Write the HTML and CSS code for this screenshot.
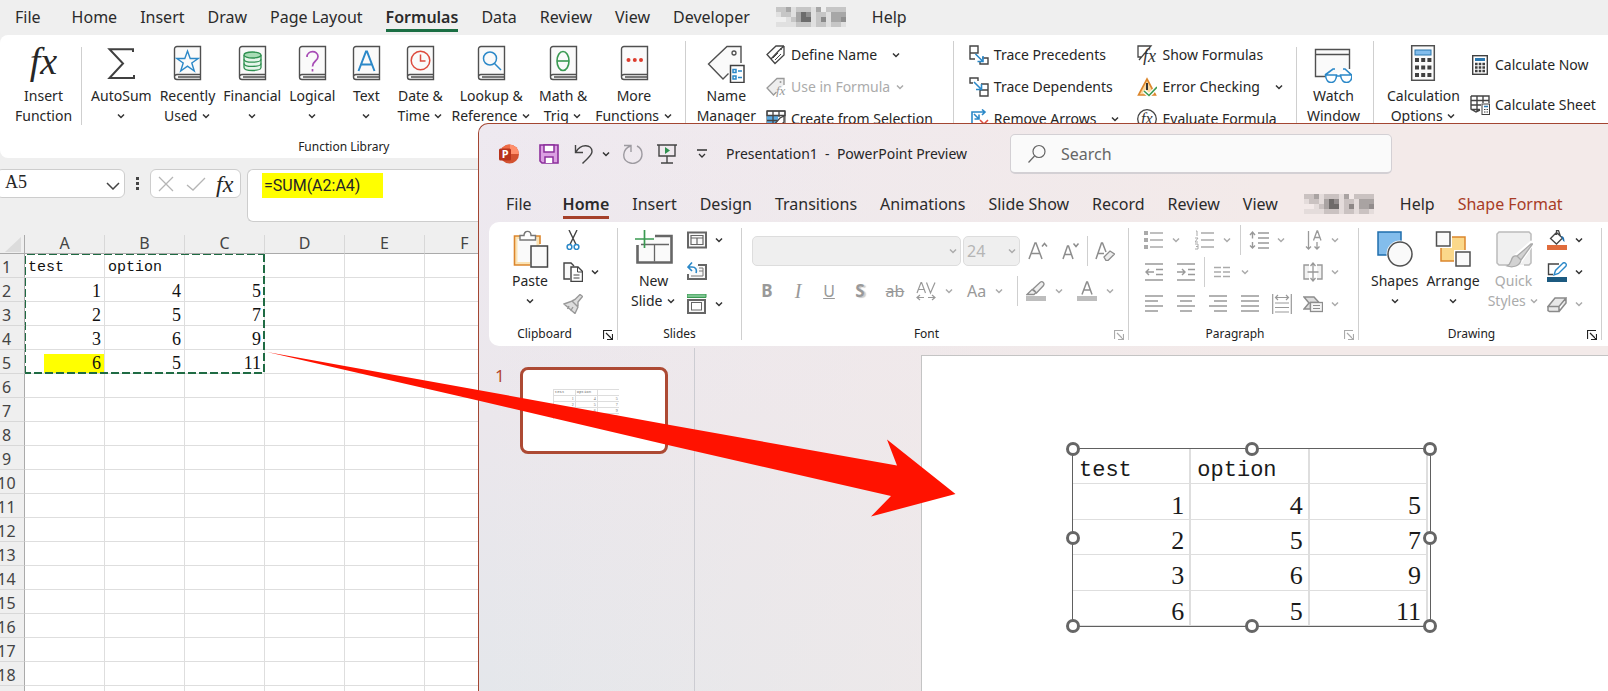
FILE: index.html
```html
<!DOCTYPE html>
<html lang="en">
<head>
<meta charset="utf-8">
<title>Spreadsheet and presentation</title>
<link rel="stylesheet" href="styles.css">
</head>
<body>
<svg class="defs" aria-hidden="true">
  <symbol id="chev" viewBox="0 0 10 10"><path d="M2 3.500l3 3 3-3" fill="none" stroke="currentColor" stroke-width="1.500"/></symbol>
  <symbol id="book" viewBox="0 0 36 36"><path d="M8 1.500H31.500V34.500H8a2.500 2.500 0 0 1-2.500-2.500V4a2.500 2.500 0 0 1 2.500-2.500zM5.500 32a2.500 2.500 0 0 1 2.500-2.500H31.500M9 32H31" fill="#fafafa" stroke="#505050" stroke-width="1.400"/></symbol>
  <symbol id="launch" viewBox="0 0 10 10"><path d="M.5 9V.5H9M3 3l6 6M9.500 4v5.500H4" fill="none" stroke="currentColor" stroke-width="1.200"/></symbol>
  <symbol id="mosaic" viewBox="0 0 14 4">
    <path fill="#000" opacity=".06" d="M0 1h1v1h-1zM0 3h2v1h-2zM3 0h1v2h-1zM3 3h1v1h-1zM7 0h1v4h-1zM10 1h1v3h-1zM2 2h1v2h-1zM13 3h1v1h-1z"/>
    <path fill="#000" opacity=".17" d="M0 0h1v1h-1zM1 0h1v2h-1zM2 1h1v1h-1zM4 0h3v1h-3zM8 1h2v2h-2zM10 0h4v1h-4zM8 3h2v1h-2zM4 3h3v1h-3zM11 3h2v1h-2zM3 2h1v1h-1z"/>
    <path fill="#000" opacity=".3" d="M2 0h1v1h-1zM4 1h1v2h-1zM8 0h1v1h-1zM9 2h1v1h-1zM11 1h2v2h-2zM13 1h1v1h-1z"/>
    <path fill="#000" opacity=".55" d="M5 1h1v2h-1zM6 2h1v1h-1z"/>
    <path fill="#000" opacity=".4" d="M6 1h1v1h-1zM13 2h1v1h-1z"/>
  </symbol>
</svg>

<main class="excel">
  <nav class="tabs xl-tabs">
    <a href="#" class="file">File</a><a href="#">Home</a><a href="#">Insert</a><a href="#">Draw</a><a href="#">Page Layout</a><a href="#" class="active">Formulas</a><a href="#">Data</a><a href="#">Review</a><a href="#">View</a><a href="#">Developer</a><a href="#" aria-label="Add-in tab"><svg class="mosaic"><use href="#mosaic"/></svg></a><a href="#">Help</a>
  </nav>

  <div class="ribbon xl-ribbon">
    <section class="group library">
      <div class="tools">
        <button class="big"><span class="ico fx">fx</span><span>Insert<br>Function</span></button>
        <i class="sep short"></i>
        <button class="big"><svg class="ico" viewBox="0 0 36 36"><path d="M30 7V4.200H6.500L20 18.500 6.500 33H31v-3" fill="none" stroke="#404040" stroke-width="2"/></svg><span>AutoSum<br><svg class="chev"><use href="#chev"/></svg></span></button>
        <button class="big"><svg class="ico" viewBox="0 0 36 36"><use href="#book"/><path d="M18.500 6l2.700 7.500h8L22.800 18l2.500 8-6.800-4.800L11.700 26l2.500-8-6.400-4.500h8z" fill="none" stroke="#2b88c8" stroke-width="1.400"/></svg><span>Recently<br>Used <svg class="chev"><use href="#chev"/></svg></span></button>
        <button class="big"><svg class="ico" viewBox="0 0 36 36"><use href="#book"/><path d="M10 10v12.500c0 4 17 4 17 0V10" fill="#e6f5ea" stroke="#2f9150" stroke-width="1.300"/><ellipse cx="18.500" cy="10" rx="8.500" ry="3" fill="#a8dcb5" stroke="#2f9150" stroke-width="1.300"/><path d="M10 14.200c0 4 17 4 17 0M10 18.400c0 4 17 4 17 0" fill="none" stroke="#2f9150" stroke-width="1.300"/></svg><span>Financial<br><svg class="chev"><use href="#chev"/></svg></span></button>
        <button class="big"><svg class="ico" viewBox="0 0 36 36"><use href="#book"/><path d="M13 12c0-7 11-7 11-.5 0 5-5.500 4-5.500 10M18.500 24v2.500" fill="none" stroke="#a74bb5" stroke-width="1.700"/></svg><span>Logical<br><svg class="chev"><use href="#chev"/></svg></span></button>
        <button class="big narrow"><svg class="ico" viewBox="0 0 36 36"><use href="#book"/><path d="M10.500 26L18 6.500h1L26.500 26M13 19.500h11" fill="none" stroke="#2b88c8" stroke-width="2"/></svg><span>Text<br><svg class="chev"><use href="#chev"/></svg></span></button>
        <button class="big"><svg class="ico" viewBox="0 0 36 36"><use href="#book"/><circle cx="18.500" cy="15.500" r="9.300" fill="none" stroke="#dd4b3e" stroke-width="1.500"/><path d="M18.500 9.500v6.500h5" fill="none" stroke="#dd4b3e" stroke-width="1.500"/></svg><span>Date &amp;<br>Time <svg class="chev"><use href="#chev"/></svg></span></button>
        <button class="big"><svg class="ico" viewBox="0 0 36 36"><use href="#book"/><circle cx="17" cy="13.500" r="6.500" fill="none" stroke="#2b88c8" stroke-width="1.500"/><path d="M21.500 18.500l6.500 6.500" stroke="#2b88c8" stroke-width="1.500"/></svg><span>Lookup &amp;<br>Reference <svg class="chev"><use href="#chev"/></svg></span></button>
        <button class="big"><svg class="ico" viewBox="0 0 36 36"><use href="#book"/><ellipse cx="18" cy="16" rx="6" ry="9.500" fill="none" stroke="#3a9a52" stroke-width="1.600"/><path d="M12 16h12" stroke="#3a9a52" stroke-width="1.600"/></svg><span>Math &amp;<br>Trig <svg class="chev"><use href="#chev"/></svg></span></button>
        <button class="big"><svg class="ico" viewBox="0 0 36 36"><use href="#book"/><g fill="#dd3d2e"><circle cx="12.500" cy="15" r="2"/><circle cx="18.800" cy="15" r="2"/><circle cx="25" cy="15" r="2"/></g></svg><span>More<br>Functions <svg class="chev"><use href="#chev"/></svg></span></button>
      </div>
      <div class="caption"><span>Function Library</span></div>
    </section>
    <i class="sep"></i>
    <section class="group names">
      <div class="tools">
        <button class="big"><svg class="ico wide" viewBox="0 0 38 38"><path d="M34 18V1.500H20L1.500 19 16 34l5.500-5.500" fill="#fafafa" stroke="#505050" stroke-width="1.400"/><circle cx="27" cy="8" r="2" fill="none" stroke="#505050" stroke-width="1.300"/><rect x="23.500" y="20.500" width="13.500" height="17" fill="#fff" stroke="#404040" stroke-width="1.500"/><path d="M26 24.500h3v3h-3zM26 31h3v3h-3zM31 26h4M31 32.500h4" fill="none" stroke="#2b88c8" stroke-width="1.500"/></svg><span>Name<br>Manager</span></button>
        <div class="stack">
          <button class="line"><svg viewBox="0 0 20 20"><path d="M18 1v9L9 18.500 5 14M18 1h-8L1 9.500l4 4.500L13 5.500M18 1l-5 4.500M18 4.500v6" fill="none" stroke="#444" stroke-width="1.300"/><circle cx="15" cy="4" r="1" fill="#444"/><path d="M7 13l5-5M9 15l6-6" stroke="#444"/></svg>Define Name<svg class="chev far"><use href="#chev"/></svg></button>
          <button class="line off" disabled><svg viewBox="0 0 20 20"><path d="M18 8V1.500h-7L1 11l6.500 7 3-3" fill="#eee" stroke="#999" stroke-width="1.300"/><circle cx="14.500" cy="5" r="1" fill="#999"/><text x="10" y="18" class="fx-svg" font-size="13" fill="#999">fx</text></svg>Use in Formula<svg class="chev"><use href="#chev"/></svg></button>
          <button class="line"><svg viewBox="0 0 20 20"><path d="M1 2h18v17H1z" fill="#fff" stroke="#444"/><path d="M1 7h11v9H1z" fill="#5aa9e0"/><path d="M1 2h18v4.500H1zM7 2v17M13 2v6M1 11.500h10" fill="none" stroke="#444" stroke-width="1.300"/><path d="M18 7v6l-7 7-4-3 7-8z" fill="#fff" stroke="#444" stroke-width="1.300"/></svg>Create from Selection</button>
        </div>
      </div>
    </section>
    <i class="sep"></i>
    <section class="group audit">
      <div class="tools">
        <div class="stack">
          <button class="line"><svg viewBox="0 0 20 20"><path d="M1 1h8v7H1zM1 8v6h5M13 13h6v6h-8v-3" fill="#fff" stroke="#444" stroke-width="1.400"/><path d="M6.500 9l7 7M14 11v5.500H8.500" fill="none" stroke="#2b88c8" stroke-width="1.600"/></svg>Trace Precedents</button>
          <button class="line"><svg viewBox="0 0 20 20"><path d="M4 6H1V1h8v3M12 7h7v12h-8v-6h8" fill="#fff" stroke="#444" stroke-width="1.400"/><path d="M5 5l7 7M12.500 7v5.500H7" fill="none" stroke="#2b88c8" stroke-width="1.600"/></svg>Trace Dependents</button>
          <button class="line"><svg viewBox="0 0 20 20"><path d="M3 19V3h13M13 .5L16 3l-3 3M5 5l5 5M10 5.500V10H5.500" fill="none" stroke="#2b88c8" stroke-width="1.600"/><path d="M11 11l7 7M19 11l-7 7" stroke="#dd4b3e" stroke-width="1.600"/></svg>Remove Arrows<svg class="chev far"><use href="#chev"/></svg></button>
        </div>
        <div class="stack">
          <button class="line"><svg viewBox="0 0 20 20"><path d="M5 12H1V1h13L2 15" fill="none" stroke="#444" stroke-width="1.300"/><text x="6" y="17" class="fx-svg" font-size="18" fill="#333">fx</text></svg>Show Formulas</button>
          <button class="line"><svg viewBox="0 0 20 20"><path d="M10 2l8.500 16H1.500z" fill="#fbd9a0" stroke="#dc862c" stroke-width="1.600"/><path d="M10 6v7" stroke="#333" stroke-width="2"/><path d="M7 14l5 4.500 8-8.500" fill="none" stroke="#fff" stroke-width="4"/><path d="M7 14l5 4.500 8-8.500" fill="none" stroke="#3a9a52" stroke-width="1.600"/></svg>Error Checking<svg class="chev far"><use href="#chev"/></svg></button>
          <button class="line"><svg viewBox="0 0 20 20"><circle cx="10" cy="10" r="9.300" fill="#fff" stroke="#444" stroke-width="1.300"/><text x="4" y="14.500" class="fx-svg" font-size="16" fill="#333">fx</text></svg>Evaluate Formula</button>
        </div>
        <i class="sep short"></i>
        <button class="big"><svg class="ico wide" viewBox="0 0 38 38"><path d="M11 31.500H1.500V4.500h34V24" fill="#fafafa" stroke="#505050" stroke-width="1.400"/><path d="M1.500 9.500h34" stroke="#505050" stroke-width="1.400"/><path d="M11 30h11.500c0 10-10.500 10-11 0zM26.500 30H38c0 10-10.500 10-11.500 0zM22 31h5M11 30l8-6h2M37.500 30l-6.500-6h-2" fill="none" stroke="#2b88c8" stroke-width="1.600"/></svg><span>Watch<br>Window</span></button>
      </div>
    </section>
    <i class="sep"></i>
    <section class="group calc">
      <div class="tools">
        <button class="big"><svg class="ico" viewBox="0 0 36 36"><rect x="6.700" y=".7" width="22.600" height="34.600" fill="#fafafa" stroke="#505050" stroke-width="1.500"/><rect x="10" y="5" width="16" height="5" fill="#83bdec" stroke="#2b78b0"/><path d="M10 15h17M10 22.500h17M10 30h17" stroke="#404040" stroke-width="4" stroke-dasharray="4 2.200"/></svg><span>Calculation<br>Options <svg class="chev"><use href="#chev"/></svg></span></button>
        <div class="stack loose">
          <button class="line"><svg viewBox="0 0 20 20"><rect x="2.700" y=".7" width="14.600" height="18.600" fill="#fff" stroke="#404040" stroke-width="1.400"/><path d="M5 4.500h10" stroke="#2b78b0" stroke-width="3"/><path d="M5 9h10M5 12.500h10M5 16h10" stroke="#404040" stroke-width="2.400" stroke-dasharray="2.600 1.100"/></svg>Calculate Now</button>
          <button class="line"><svg viewBox="0 0 20 20"><path d="M1 1h18v7M1 1v13l5 3 4-2M1 5.500h18M1 10h10M1 14.500h9M7 1v15M13 1v7" fill="none" stroke="#444" stroke-width="1.400"/><rect x="12" y="9" width="7.500" height="10.500" fill="#fff" stroke="#404040"/><path d="M14 11.500h4" stroke="#2b78b0" stroke-width="1.500"/><path d="M14 14.500h4M14 17h4" stroke="#404040" stroke-dasharray="1.500 1"/></svg>Calculate Sheet</button>
        </div>
      </div>
    </section>
  </div>

  <div class="formula-row">
    <label class="namebox"><input value="A5" aria-label="Name box"><svg class="drop" viewBox="0 0 14 8"><path d="M1 1l6 6 6-6" fill="none" stroke="#444" stroke-width="1.500"/></svg></label>
    <svg class="dots" viewBox="0 0 4 14"><path d="M0 0h3v3H0zM0 5h3v3H0zM0 10h3v3H0z" fill="#444"/></svg>
    <div class="fxbox">
      <button aria-label="Cancel"><svg viewBox="0 0 20 16"><path d="M3 1l14 14M17 1L3 15" stroke="#b5b5b5" stroke-width="1.300"/></svg></button>
      <button aria-label="Enter"><svg viewBox="0 0 20 16"><path d="M1 9l6 5L19 2" fill="none" stroke="#b5b5b5" stroke-width="1.300"/></svg></button>
      <button class="fx-small">fx</button>
    </div>
    <div class="formula"><input value="=SUM(A2:A4)" aria-label="Formula"></div>
  </div>

  <div class="sheet">
    <table>
      <thead><tr><th class="corner"><svg viewBox="0 0 16 15"><path d="M16 0v15H0z" fill="#dcdcdc"/></svg></th><th>A</th><th>B</th><th>C</th><th>D</th><th>E</th><th>F</th></tr></thead>
      <tbody>
      <tr><th>1</th><td class="word">test</td><td class="word">option</td><td></td><td></td><td></td><td></td></tr>
      <tr><th>2</th><td>1</td><td>4</td><td>5</td><td></td><td></td><td></td></tr>
      <tr><th>3</th><td>2</td><td>5</td><td>7</td><td></td><td></td><td></td></tr>
      <tr><th>4</th><td>3</td><td>6</td><td>9</td><td></td><td></td><td></td></tr>
      <tr><th>5</th><td class="marked">6</td><td>5</td><td>11</td><td></td><td></td><td></td></tr>
      <tr><th>6</th><td></td><td></td><td></td><td></td><td></td><td></td></tr>
      <tr><th>7</th><td></td><td></td><td></td><td></td><td></td><td></td></tr>
      <tr><th>8</th><td></td><td></td><td></td><td></td><td></td><td></td></tr>
      <tr><th>9</th><td></td><td></td><td></td><td></td><td></td><td></td></tr>
      <tr><th>10</th><td></td><td></td><td></td><td></td><td></td><td></td></tr>
      <tr><th>11</th><td></td><td></td><td></td><td></td><td></td><td></td></tr>
      <tr><th>12</th><td></td><td></td><td></td><td></td><td></td><td></td></tr>
      <tr><th>13</th><td></td><td></td><td></td><td></td><td></td><td></td></tr>
      <tr><th>14</th><td></td><td></td><td></td><td></td><td></td><td></td></tr>
      <tr><th>15</th><td></td><td></td><td></td><td></td><td></td><td></td></tr>
      <tr><th>16</th><td></td><td></td><td></td><td></td><td></td><td></td></tr>
      <tr><th>17</th><td></td><td></td><td></td><td></td><td></td><td></td></tr>
      <tr><th>18</th><td></td><td></td><td></td><td></td><td></td><td></td></tr>
      <tr><th></th><td></td><td></td><td></td><td></td><td></td><td></td></tr>
      </tbody>
    </table>
    <svg class="marquee" viewBox="0 0 241 120"><g fill="none" stroke="#1f6b43" stroke-dasharray="8 3"><path d="M.5 120V.5H240"/><path d="M239 0v119H0" stroke-width="2"/></g></svg>
  </div>
</main>

<section class="ppt">
  <header class="titlebar">
    <svg class="i20" viewBox="0 0 20 20"><circle cx="10.500" cy="10" r="9.500" fill="#d35230"/><path d="M10.500.5a9.500 9.500 0 0 1 9.500 9.500h-9.500z" fill="#ff8f6b"/><path d="M10.500 .5A9.500 9.500 0 0 0 2 6l8.500 4z" fill="#ed6c47"/><rect y="4.500" width="12" height="12" rx="1.500" fill="#b7331b"/><text x="2.800" y="14" class="logo-p">P</text></svg>
    <button class="i20 save" aria-label="Save"><svg viewBox="0 0 20 20"><path d="M1 1h18v18H3l-2-2z" fill="#dba0e2" stroke="#8c2f9c" stroke-width="1.600"/><path d="M5 1h10v7H5zM6 19v-6h8v6" fill="#fff" stroke="#8c2f9c" stroke-width="1.500"/></svg></button>
    <button class="split undo" aria-label="Undo"><svg class="i20" viewBox="0 0 20 20"><path d="M1.500 1v7.500H9M2 8C7-1 18 .5 18 7.500c0 4-4 6-9.500 12" fill="none" stroke="#444" stroke-width="1.400"/></svg><svg class="chev"><use href="#chev"/></svg></button>
    <button class="i20 redo" aria-label="Repeat"><svg viewBox="0 0 20 20"><path d="M1 1.500h7V8M7.500 2C-1 5.500-1 15 5 18.200c7 3.500 14-1.500 14-8C19 6 17 3.500 14 2" fill="none" stroke="#9d9aa0" stroke-width="1.400"/></svg></button>
    <button class="i20 present" aria-label="Start slide show"><svg viewBox="0 0 20 20"><path d="M0 1h20M2 1v11h16V1M10 12v7M4 19h12" fill="none" stroke="#444" stroke-width="1.400"/><path d="M8 3l5 3.500L8 10z" fill="#2f9150"/></svg></button>
    <button class="more" aria-label="Customize toolbar"><svg viewBox="0 0 10 10"><path d="M0 1h10M2 5l3 3 3-3" fill="none" stroke="#333" stroke-width="1.300"/></svg></button>
    <h1>Presentation1&nbsp; -&nbsp; PowerPoint Preview</h1>
    <label class="search"><svg viewBox="0 0 20 20"><circle cx="12" cy="7.500" r="6" fill="none" stroke="#666" stroke-width="1.200"/><path d="M7.500 12L1.500 18.500" stroke="#666" stroke-width="1.200"/></svg><input placeholder="Search" aria-label="Search"></label>
  </header>

  <nav class="tabs ppt-tabs">
    <a href="#" class="file">File</a><a href="#" class="active">Home</a><a href="#">Insert</a><a href="#">Design</a><a href="#">Transitions</a><a href="#">Animations</a><a href="#">Slide Show</a><a href="#">Record</a><a href="#">Review</a><a href="#">View</a><a href="#" aria-label="Add-in tab"><svg class="mosaic"><use href="#mosaic"/></svg></a><a href="#">Help</a><a href="#" class="context">Shape Format</a>
  </nav>

  <div class="ribbon ppt-ribbon">
    <section class="group clipboard">
      <div class="tools">
        <button class="big"><svg class="ico wide" viewBox="0 0 38 38"><path d="M29 14V6H3.500v29H19" fill="#fbe3b4" stroke="#dc862c" stroke-width="1.600"/><path d="M6.500 9h19v23h-19z" fill="#fafafa"/><path d="M9 10V5.500h4c0-5.500 7-5.500 7 0h4.500V10z" fill="#fff" stroke="#777" stroke-width="1.400"/><rect x="20" y="16" width="16.500" height="21" fill="#fafafa" stroke="#444" stroke-width="1.500"/></svg><span>Paste<br><svg class="chev"><use href="#chev"/></svg></span></button>
        <div class="stack">
          <button class="split" aria-label="Cut"><svg class="i20" viewBox="0 0 20 20"><path d="M6 0l7 14.500M14 0L7 14.500" stroke="#444" stroke-width="1.400"/><g fill="none" stroke="#2b88c8" stroke-width="1.500"><circle cx="6.500" cy="17" r="2.400"/><circle cx="13.500" cy="17" r="2.400"/></g></svg></button>
          <button class="split" aria-label="Copy"><svg class="i20" viewBox="0 0 20 20"><path d="M7 17H1V1h7l3 3" fill="#fafafa" stroke="#444" stroke-width="1.400"/><path d="M8 5h7l4.500 4.500V19.500H8z" fill="#fff" stroke="#444" stroke-width="1.400"/><path d="M14.500 5v5h5M10.500 13h6M10.500 16h6" fill="none" stroke="#444"/></svg><svg class="chev"><use href="#chev"/></svg></button>
          <button class="split" aria-label="Format painter"><svg class="i20" viewBox="0 0 20 20"><path d="M1 10l8-3 6 6-3 6.500zM9 7l3-1.500L17 .5l2.500 2L15 8v4M6 12l-1.500 3M10 13l-2.500 4" fill="#ddd" stroke="#999" stroke-width="1.400"/></svg></button>
        </div>
      </div>
      <div class="caption with-launch"><span>Clipboard</span><button class="launch" aria-label="Clipboard options"><svg><use href="#launch"/></svg></button></div>
    </section>
    <i class="sep"></i>
    <section class="group slides">
      <div class="tools">
        <button class="big"><svg class="ico wide" viewBox="0 0 38 38"><path d="M20 6h16.500v26.500h-34V15" fill="#fafafa" stroke="#666" stroke-width="2.600"/><path d="M6 14.500h28M19.500 14.500v17" stroke="#666" stroke-width="1.300"/><path d="M9.500 0v18M0 9h19" stroke="#3a9a52" stroke-width="1.700"/></svg><span>New<br>Slide <svg class="chev"><use href="#chev"/></svg></span></button>
        <div class="stack">
          <button class="split" aria-label="Layout"><svg class="i20" viewBox="0 0 20 20"><rect x="1" y="2.500" width="18" height="15" fill="#fafafa" stroke="#666" stroke-width="2"/><path d="M4 5.500h12v9H4zM4 8h12M10 8v6.500" fill="none" stroke="#666" stroke-width="1.200"/></svg><svg class="chev"><use href="#chev"/></svg></button>
          <button class="split" aria-label="Reset"><svg class="i20" viewBox="0 0 20 20"><path d="M11 3h8v14H1V12" fill="#fafafa" stroke="#666" stroke-width="2"/><path d="M12 6h4M12 9h4M4 14h12V6" fill="none" stroke="#777"/><path d="M5 .5L1 5l4 4M1 5h4c4 0 5 3 4 6" fill="none" stroke="#2b88c8" stroke-width="1.600"/></svg></button>
          <button class="split" aria-label="Section"><svg class="i20" viewBox="0 0 20 20"><path d="M0 0h19v3.500H0z" fill="#7cc490"/><path d="M0 0h19v3.500H0z" fill="none" stroke="#3a9a52"/><rect x="1" y="6" width="17" height="13" fill="#fafafa" stroke="#666" stroke-width="2"/><rect x="4.500" y="8.500" width="10" height="7.500" fill="#fff" stroke="#666"/></svg><svg class="chev"><use href="#chev"/></svg></button>
        </div>
      </div>
      <div class="caption"><span>Slides</span></div>
    </section>
    <i class="sep"></i>
    <section class="group font off">
      <div class="font-rows">
        <div class="row">
          <label class="combo name"><select disabled aria-label="Font"><option></option></select><svg class="chev"><use href="#chev"/></svg></label>
          <label class="combo size"><select disabled aria-label="Font size"><option>24</option></select><svg class="chev"><use href="#chev"/></svg></label>
          <button class="i20 grow" disabled aria-label="Increase font size"><svg viewBox="0 0 20 20"><path d="M1 18L7 2h1l6 16M3 12.500h9M14 5.500l2.500-3 2.500 3" fill="none" stroke="#8d8d8d" stroke-width="1.500"/></svg></button>
          <button class="i20 shrink" disabled aria-label="Decrease font size"><svg viewBox="0 0 20 20"><path d="M3 18L7.500 5h1L13 18M4.500 13.500h7M13.500 2.500l2.500 3 2.500-3" fill="none" stroke="#8d8d8d" stroke-width="1.500"/></svg></button>
          <i class="sep mini"></i>
          <button class="i20" disabled aria-label="Clear formatting"><svg viewBox="0 0 20 20"><path d="M1 18L6.500 2h1L11 11M3 12.500h6" fill="none" stroke="#8d8d8d" stroke-width="1.500"/><path d="M9 16l6-6 4.500 3L13 19.500h-2z" fill="#eee" stroke="#8d8d8d" stroke-width="1.300"/></svg></button>
        </div>
        <div class="row styles">
          <button class="i20 letter" disabled><b>B</b></button>
          <button class="i20 letter serif" disabled><em>I</em></button>
          <button class="i20 letter" disabled><u>U</u></button>
          <button class="i20 letter shadow" disabled><b>S</b></button>
          <button class="i20 letter small" disabled><s>ab</s></button>
          <button class="split" disabled aria-label="Character spacing"><svg class="i20" viewBox="0 0 20 20"><path d="M1 12L5 1.500h.6L9.500 12M2.500 8.500h6M10.500 1.500L14.500 12l4.500-10.500M4 14L1 16.500 4 19M1 16.500h7M16 14l3 2.500-3 2.500M19 16.500h-7" fill="none" stroke="#999" stroke-width="1.200"/></svg><svg class="chev"><use href="#chev"/></svg></button>
          <button class="split letter" disabled>Aa<svg class="chev"><use href="#chev"/></svg></button>
          <i class="sep mini"></i>
          <button class="split" disabled aria-label="Highlight"><svg class="i20" viewBox="0 0 20 20"><path d="M1 13.500l5-5 4 3-2 2zM7 8l7.500-7c2-1 4.500 1 3 3.500L10.500 12z" fill="#eee" stroke="#8d8d8d" stroke-width="1.300"/><path d="M0 15h20v5H0z" fill="#bdbdbd"/></svg><svg class="chev"><use href="#chev"/></svg></button>
          <button class="split" disabled aria-label="Font color"><svg class="i20" viewBox="0 0 20 20"><path d="M5 13.500L9.700 1h.8L15 13.500M6.500 9h7" fill="none" stroke="#8d8d8d" stroke-width="1.500"/><path d="M0 15h20v5H0z" fill="#bdbdbd"/></svg><svg class="chev"><use href="#chev"/></svg></button>
        </div>
      </div>
      <div class="caption with-launch"><span>Font</span><button class="launch" aria-label="Font options"><svg><use href="#launch"/></svg></button></div>
    </section>
    <i class="sep"></i>
    <section class="group paragraph off">
      <div class="tools">
        <div class="stack">
          <div class="row">
            <button class="split" disabled aria-label="Bullets"><svg class="i20" viewBox="0 0 20 20"><path d="M0 1h4v4H0zM0 8h4v4H0zM0 15h4v4H0z" fill="#aaa"/><path d="M6 3h13M6 10h13M6 17h13" stroke="#aaa" stroke-width="1.500"/></svg><svg class="chev"><use href="#chev"/></svg></button>
            <button class="split" disabled aria-label="Numbering"><svg class="i20" viewBox="0 0 20 20"><path d="M1 1h1v5M0 8h3l-3 4h3M0 14h3v5H0M1 16.500h2" fill="none" stroke="#aaa"/><path d="M6 3h13M6 10h13M6 17h13" stroke="#aaa" stroke-width="1.500"/></svg><svg class="chev"><use href="#chev"/></svg></button>
            <i class="sep mini"></i>
            <button class="split" disabled aria-label="Line spacing"><svg class="i20" viewBox="0 0 20 20"><path d="M3.500 3v5.500M1 5l2.500-3L6 5M3.500 18v-6M1 15.500L3.500 18 6 15.500M9 3h11M9 8h11M9 13h11M9 18h11" fill="none" stroke="#999" stroke-width="1.400"/></svg><svg class="chev"><use href="#chev"/></svg></button>
          </div>
          <div class="row twelve">
            <button class="i20" disabled aria-label="Outdent"><svg viewBox="0 0 20 20"><path d="M1 2h18M12 7.500h7M12 12.500h7M1 18h18M2 10h8M5 7l-3 3 3 3" fill="none" stroke="#999" stroke-width="1.400"/></svg></button>
            <button class="i20" disabled aria-label="Indent"><svg viewBox="0 0 20 20"><path d="M1 2h18M12 7.500h7M12 12.500h7M1 18h18M1 10h8M6 7l3 3-3 3" fill="none" stroke="#999" stroke-width="1.400"/></svg></button>
            <i class="sep mini tight"></i>
            <button class="split" disabled aria-label="Columns"><svg class="i20" viewBox="0 0 20 20"><path d="M1 5.500h7M1 10h7M1 14.500h7M10 5.500h7M10 10h7M10 14.500h7" stroke="#aaa" stroke-width="1.300"/></svg><svg class="chev"><use href="#chev"/></svg></button>
          </div>
          <div class="row twelve">
            <button class="i20" disabled aria-label="Align left"><svg viewBox="0 0 20 20"><path d="M1 2h18M1 7h13M1 12h18M1 17h13" stroke="#999" stroke-width="1.400"/></svg></button>
            <button class="i20" disabled aria-label="Center"><svg viewBox="0 0 20 20"><path d="M1 2h18M4 7h12M1 12h18M4 17h12" stroke="#999" stroke-width="1.400"/></svg></button>
            <button class="i20" disabled aria-label="Align right"><svg viewBox="0 0 20 20"><path d="M1 2h18M6 7h13M1 12h18M6 17h13" stroke="#999" stroke-width="1.400"/></svg></button>
            <button class="i20" disabled aria-label="Justify"><svg viewBox="0 0 20 20"><path d="M1 2h18M1 7h18M1 12h18M1 17h18" stroke="#999" stroke-width="1.400"/></svg></button>
            <button class="i20" disabled aria-label="Distribute"><svg viewBox="0 0 20 20"><path d="M.7 0v20M19.300 0v20M3 9h14M3 13.500h14M3 18h14M4 3.500h12M6 1L3.500 3.500 6 6M14 1l2.500 2.500L14 6" fill="none" stroke="#999" stroke-width="1.200"/></svg></button>
          </div>
        </div>
        <div class="stack">
          <button class="split" disabled aria-label="Text direction"><svg class="i20" viewBox="0 0 20 20"><path d="M5.500 1v18M3 16.500L5.500 19 8 16.500M14 12v7M11.500 16.500L14 19l2.500-2.500M10.500 10.500L14 1h.6L18 10.500M11.500 7.500h5" fill="none" stroke="#999" stroke-width="1.300"/></svg><svg class="chev"><use href="#chev"/></svg></button>
          <button class="split" disabled aria-label="Align text"><svg class="i20" viewBox="0 0 20 20"><path d="M6 3H1v14h5M14 3h5v14h-5" fill="#f2f2f2" stroke="#999" stroke-width="1.400"/><path d="M10 1v18M7.500 4L10 1l2.500 3M7.500 16l2.500 3 2.500-3M4.500 10h11" fill="none" stroke="#999" stroke-width="1.300"/></svg><svg class="chev"><use href="#chev"/></svg></button>
          <button class="split" disabled aria-label="Convert to SmartArt"><svg class="i20" viewBox="0 0 20 20"><path d="M1 3h10l5 5.500H7.500V15H1l5-6z" fill="#ddd" stroke="#8d8d8d" stroke-width="1.500"/><rect x="7.500" y="8.500" width="12" height="9" fill="#f5f5f5" stroke="#8d8d8d" stroke-width="1.300"/><path d="M10 11.500h7M10 14.500h7" stroke="#8d8d8d" stroke-width="1.200"/></svg><svg class="chev"><use href="#chev"/></svg></button>
        </div>
      </div>
      <div class="caption with-launch"><span>Paragraph</span><button class="launch" aria-label="Paragraph options"><svg><use href="#launch"/></svg></button></div>
    </section>
    <i class="sep"></i>
    <section class="group drawing">
      <div class="tools">
        <button class="big"><svg class="ico wide" viewBox="0 0 38 38"><path d="M2 2h23v23H2z" fill="#83bdec" stroke="#1f6eac" stroke-width="1.500"/><circle cx="24" cy="24" r="13.500" fill="#fff"/><circle cx="24" cy="24" r="12" fill="#fafafa" stroke="#505050" stroke-width="1.500"/></svg><span>Shapes<br><svg class="chev"><use href="#chev"/></svg></span></button>
        <button class="big"><svg class="ico wide" viewBox="0 0 38 38"><path d="M7 7h24v24H7z" fill="#fbd88a" stroke="#dc862c" stroke-width="1.500"/><path d="M0 0h18v18H0zM20 20h18v18H20z" fill="#fff"/><path d="M2.500 2h13.500v14H2.500zM22 22h14v14H22z" fill="#fafafa" stroke="#505050" stroke-width="1.500"/></svg><span>Arrange<br><svg class="chev"><use href="#chev"/></svg></span></button>
        <button class="big off" disabled><svg class="ico wide" viewBox="0 0 38 38"><path d="M14 35H4l-2-2V4l2-2h30l2 2v29l-2 2h-5" fill="#f0f0f0" stroke="#bbb" stroke-width="1.500"/><path d="M37 14L26 30l-5-4L36 13z" fill="#eee" stroke="#fff" stroke-width="4"/><path d="M37.500 14L26 30l-4-4L36 14zM22 26c-4-1-5 2-6 5s-2 4-4 5c6 2 13 0 14-6z" fill="#d2d2d2" stroke="#aaa" stroke-width="1.300"/></svg><span>Quick<br>Styles <svg class="chev"><use href="#chev"/></svg></span></button>
        <div class="stack">
          <button class="split" aria-label="Shape fill"><svg class="i20" viewBox="0 0 20 20"><path d="M3.500 8.500L9.500 2.500l6 5.500-6 6zM9.500 5V.5h2l2 6" fill="#fff" stroke="#444" stroke-width="1.300"/><path d="M14 6c3 0 3.500 3 3.500 6-2-1-2-3-3.500-6z" fill="#1f6eac"/><path d="M0 15h20v5H0z" fill="#e06c3c"/></svg><svg class="chev"><use href="#chev"/></svg></button>
          <button class="split" aria-label="Shape outline"><svg class="i20" viewBox="0 0 20 20"><path d="M12 2H1.500v10.500H6" fill="none" stroke="#444" stroke-width="1.400"/><path d="M7 13l1.500-4.500L16 1c2-1 4 1 3 3l-7.500 7.500z" fill="#fff" stroke="#2b88c8" stroke-width="1.400"/><path d="M0 15h20v5H0z" fill="#1c5a80"/></svg><svg class="chev"><use href="#chev"/></svg></button>
          <button class="split effects" aria-label="Shape effects"><svg class="i20" viewBox="0 0 20 20"><path d="M1 12.500L8 4h11l-7 8.500zM1 12.500v4l1.500 1H12v-5M12 17.500L19 9V4" fill="#e8e8e8" stroke="#8a8a8a" stroke-width="1.500"/></svg><svg class="chev"><use href="#chev"/></svg></button>
        </div>
      </div>
      <div class="caption with-launch"><span>Drawing</span><button class="launch" aria-label="Drawing options"><svg><use href="#launch"/></svg></button></div>
    </section>
    <i class="sep"></i>
  </div>

  <div class="workspace">
    <aside class="slides-panel">
      <span class="num">1</span>
      <div class="thumb">
        <table><tr><td class="word">test</td><td class="word">option</td><td></td></tr><tr><td>1</td><td>4</td><td>5</td></tr><tr><td>2</td><td>5</td><td>7</td></tr><tr><td>3</td><td>6</td><td>9</td></tr><tr><td>6</td><td>5</td><td>11</td></tr></table>
      </div>
    </aside>
    <div class="canvas">
      <div class="slide">
        <div class="object">
          <table><tr><td class="word">test</td><td class="word">option</td><td></td></tr><tr><td>1</td><td>4</td><td>5</td></tr><tr><td>2</td><td>5</td><td>7</td></tr><tr><td>3</td><td>6</td><td>9</td></tr><tr><td>6</td><td>5</td><td>11</td></tr></table>
          <i class="handle t l"></i><i class="handle t c"></i><i class="handle t r"></i><i class="handle m l"></i><i class="handle m r"></i><i class="handle b l"></i><i class="handle b c"></i><i class="handle b r"></i>
        </div>
      </div>
    </div>
  </div>
</section>

<svg class="arrow" aria-hidden="true"><path d="M267 352L478 390 670 425 897 465.500 887 439.500 955.500 494 871 516.500 891 496 670 445.500 478 400.500z" fill="#ff1200"/></svg>
</body>
</html>
```
FILE: styles.css
```css
* { box-sizing: border-box; }

body {
  margin: 0;
  min-height: 100vh;
  position: relative;
  overflow: hidden;
  background: #efefef;
  color: #262626;
  font-family: "Noto Sans", "Open Sans", sans-serif;
  font-size: 14px;
  line-height: 20px;
}

button, input, select {
  font: inherit;
  color: inherit;
  border: 0;
  background: none;
  padding: 0;
  margin: 0;
  outline: 0;
}

button { display: flex; align-items: center; justify-content: center; flex: none; }
svg { display: block; flex: none; }
.defs { position: absolute; width: 0; height: 0; }
.chev { width: 10px; height: 10px; color: #333; }
.off, .off .chev { color: #ababab; }
.fx-svg { font-family: "Liberation Serif", serif; font-style: italic; }

/* tabs */
.tabs { display: flex; gap: 23px; font-size: 16px; line-height: 24px; }
.tabs a { color: #2b2b2b; text-decoration: none; flex: none; }
.tabs .file { margin-right: 8px; }
.tabs .active { font-weight: 600; border-bottom: 3px solid #1a6e43; }
.mosaic { width: 70px; height: 20px; margin: 2px 3px 0; shape-rendering: crispEdges; }
.xl-tabs { height: 35px; padding: 5px 0 3px 15px; }
.ppt-tabs { height: 38px; padding: 8px 0 3px 27px; }
.ppt-tabs .active { border-color: #a5402a; }
.tabs .context { color: #a83c26; }

/* ribbons */
.ribbon { display: flex; background: #fff; }
.xl-ribbon { border-radius: 8px 0 0 8px; }
.group { display: flex; flex-direction: column; flex: none; }
.tools { display: flex; flex: 1; }
.sep { width: 1px; background: #cfcfcf; flex: none; margin: 6px 0; }
.sep.short { margin: 12px 10px 0 12px; height: 78px; }
.sep.mini { height: 30px; margin: 0; }
.big { flex-direction: column; justify-content: flex-start; padding-top: 10px; text-align: center; }
.big .ico { width: 36px; height: 36px; margin-bottom: 5px; flex: none; }
.big .ico.wide { width: 38px; height: 38px; margin-bottom: 3px; }
.big .chev { display: inline-block; }
.narrow { min-width: 46px; }
.fx, .fx-small { font-family: "Liberation Serif", serif; font-style: italic; }
.fx { font-size: 38px; line-height: 32px; }
.caption { position: relative; font-size: 12px; line-height: 20px; text-align: center; color: #222; }
.caption.with-launch { padding-right: 17px; }
.stack { display: flex; flex-direction: column; align-items: flex-start; }
.line { height: 32px; gap: 5px; white-space: nowrap; }
.line > svg:first-child { width: 20px; height: 20px; }
.chev.far { margin-left: 9px; }

.xl-ribbon .tools { flex: none; height: 102px; }
.xl-ribbon .stack { padding-top: 4px; }
.xl-ribbon .stack.loose { padding-top: 14px; gap: 8px; }
.library { padding: 0 12px 1px 15px; }
.library .tools { gap: 8px; }
.library .sep { margin: 12px 1px 0; }
.names { padding: 0 20px 0 11px; }
.names .tools { gap: 10px; }
.audit { padding: 0 13px 0 15px; }
.audit .stack + .stack { margin-left: 17px; }
.calc { padding-left: 13px; }
.calc .tools { gap: 10px; }

/* formula bar */
.formula-row { display: flex; align-items: flex-start; padding: 11px 0 13px; }
.namebox, .fxbox, .formula { border: 1px solid #cdcdcd; background: #fff; border-radius: 6px; }
.namebox { display: flex; align-items: center; width: 129px; height: 29px; margin-left: -4px; padding: 0 4px 0 8px; }
.namebox input { flex: 1; min-width: 0; padding-bottom: 4px; font: 18px/22px "Liberation Serif", serif; }
.drop { width: 14px; height: 8px; margin-top: 4px; }
.dots { width: 4px; height: 14px; margin: 8px 10px 0 11px; }
.fxbox { display: flex; align-items: center; gap: 10px; width: 91px; height: 29px; padding: 0 5px; }
.fxbox svg { width: 20px; height: 16px; }
.fxbox button { height: 27px; }
.fx-small { font-size: 24px; }
.formula { flex: 1; height: 53px; margin-left: 6px; padding: 3px 0 0 14px; border-right: 0; }
.formula input { display: block; width: 121px; height: 25px; padding-left: 2px; background: #ff0; font: 16px/24px Roboto, sans-serif; }

/* worksheet */
.sheet { position: relative; background: #fff; }
.sheet table { border-spacing: 0; table-layout: fixed; width: 516px; margin-left: -11px; }
.sheet th { font-weight: 400; font-size: 16px; line-height: 18px; padding: 2px 0 0; color: #444; background: #efefef; border-right: 1px solid #d8d8d8; border-bottom: 1px solid #d8d8d8; }
.sheet tr > th:first-child { width: 36px; border-right-color: #aaa; }
.sheet thead th { height: 19px; line-height: 14px; padding: 0 0 3px; border-bottom-color: #aaa; }
.sheet thead .corner { padding: 0; border-right-color: #d8d8d8; }
.corner svg { width: 16px; height: 15px; margin-left: 16px; }
.sheet td { height: 24px; padding: 4px 3px 0 0; line-height: 19px; border-right: 1px solid #dedede; border-bottom: 1px solid #dedede; text-align: right; font-family: "Liberation Serif", serif; font-size: 18px; color: #111; }
.sheet .word { text-align: left; padding: 4px 0 0 3px; font-family: "Liberation Mono", monospace; font-size: 15px; }
.sheet .marked { background: linear-gradient(#ff0, #ff0) 19px 4px no-repeat; }
.marquee { position: absolute; left: 25px; top: 19px; width: 241px; height: 120px; }

/* presentation window */
.ppt {
  position: absolute;
  inset: 123px 0 0 478px;
  display: flex;
  flex-direction: column;
  border: solid #a34632;
  border-width: 1px 0 0 1px;
  border-radius: 10px 0 0 0;
  overflow: hidden;
  background: linear-gradient(90deg, #ece9f100, #f3eae9 70%), linear-gradient(#eee9f0, #ebe7ec 50%, #e4e7eb);
}
.titlebar { display: flex; align-items: center; height: 60px; padding-left: 20px; }
.i20, .i20 > svg { width: 20px; height: 20px; }
.logo-p { font: bold 11px "Noto Sans", sans-serif; fill: #fff; }
.split { gap: 7px; }
.save { margin-left: 20px; }
.undo { margin-left: 15px; }
.redo { margin-left: 12px; }
.present { margin-left: 14px; }
.more { margin: 0 19px 0 20px; }
.more svg { width: 10px; height: 10px; }
.titlebar h1 { margin: 0; font-size: 14px; font-weight: 400; flex: 0 0 284px; white-space: nowrap; }
.search { display: flex; align-items: center; gap: 14px; flex: 0 1 382px; height: 40px; padding: 0 16px; background: #fafafa; border-radius: 5px; border: 1px solid #d3d0d4; border-bottom-width: 2px; }
.search svg { width: 20px; height: 20px; }
.search input { flex: 1; min-width: 0; font-size: 16px; }
.search input::placeholder { color: #666; opacity: 1; }

.ppt-ribbon { margin-left: 10px; border-radius: 10px 0 0 10px; height: 124px; }
.ppt-ribbon .big { padding-top: 8px; }
.ppt-ribbon .stack { padding-top: 8px; gap: 12px; }
.ppt-ribbon .caption { margin-bottom: 2px; }
.launch { position: absolute; right: 4px; top: 6px; }
.off .launch { color: #aaa; }
.launch svg { width: 10px; height: 10px; }
.clipboard { width: 128px; }
.clipboard .tools { padding-left: 22px; gap: 14px; }
.slides { width: 123px; }
.slides .tools { padding-left: 13px; gap: 11px; }
.font { width: 386px; }
.font-rows { flex: 1; padding: 14px 0 0 10px; display: flex; flex-direction: column; gap: 10px; }
.row { display: flex; align-items: center; }
.combo { position: relative; margin-right: 2px; }
.combo select { appearance: none; width: 100%; height: 30px; border: 1px solid #ddd; border-radius: 5px; background: #efefef; font-size: 16px; padding-left: 3px; color: #b5b5b5; opacity: 1; }
.combo .chev { position: absolute; right: 3px; top: 10px; }
.combo.name { width: 209px; }
.combo.size { width: 57px; }
.grow { margin: 0 12px 0 6px; }
.row .shrink + .sep { margin: 0 7px; }
.styles { gap: 11px; padding-left: 5px; }
.styles .split { gap: 8px; margin-right: 2px; }
.styles .sep { margin: 0 -3px 0 0; }
.letter { font-size: 16px; color: #999; }
.letter b { font-size: 17px; }
.letter.small { margin-left: 4px; }
.letter.serif { font-family: "Liberation Serif", serif; font-size: 20px; }
.letter.shadow { text-shadow: 2px 1px 1px #ccc; }
.paragraph { width: 229px; }
.paragraph .tools { padding-left: 15px; gap: 11px; }
.paragraph .row { height: 20px; gap: 14px; }
.paragraph .row.twelve { gap: 12px; }
.paragraph .row .sep { margin: 0 -6px; }
.paragraph .row .sep.tight { margin: 0 -4px; }
.drawing { width: 242px; }
.drawing .tools { padding-left: 12px; gap: 8px; }
.effects .chev { color: #ababab; }

.workspace { flex: 1; display: flex; min-height: 0; }
.slides-panel { flex: none; width: 216px; margin-top: 2px; display: flex; align-items: flex-start; gap: 15px; padding: 19px 0 0 16px; border-right: 1px solid #ccccd2; }
.num { font-size: 17px; line-height: 18px; color: #b5482f; }
.thumb { width: 148px; height: 87px; background: #fff; border: 3px solid #ad4a34; border-radius: 8px; padding: 19px 0 0 30px; }
.thumb table { border-spacing: 0; table-layout: fixed; width: 66px; }
.thumb td { height: 6px; padding: 0 1px; border: solid #ddd; border-width: 1px 0 0 1px; text-align: right; font: 4px/5px "Liberation Serif", serif; color: #666; }
.thumb .word { text-align: left; font-family: "Liberation Mono", monospace; }
.canvas { flex: 1; padding: 9px 0 0 226px; display: flex; }
.slide { position: relative; flex: 1; background: #fff; border: solid #c4c4c4; border-width: 1px 0 0 1px; }
.object { position: absolute; left: 150px; top: 92px; border: 1px solid #606060; padding-right: 2px; }
.object table { border-spacing: 0; table-layout: fixed; width: 355px; height: 177px; }
.object td { padding: 8px 5px 0 0; border: solid #dedede; border-width: 0 2px 1px 0; text-align: right; font: 26px/26px "Liberation Serif", serif; color: #1a1a1a; }
.object .word { text-align: left; padding: 9px 0 0 6px; font: 22px/25px "Liberation Mono", monospace; }
.handle { position: absolute; width: 14px; height: 14px; border: 3px solid #666; border-radius: 50%; background: #fff; }
.handle.t { top: -7px; }
.handle.m { top: calc(50% - 7px); }
.handle.b { bottom: -7px; }
.handle.l { left: -7px; }
.handle.c { left: calc(50% - 7px); }
.handle.r { right: -7px; }

.arrow { position: absolute; inset: 0; width: 100%; height: 100%; pointer-events: none; }
```
